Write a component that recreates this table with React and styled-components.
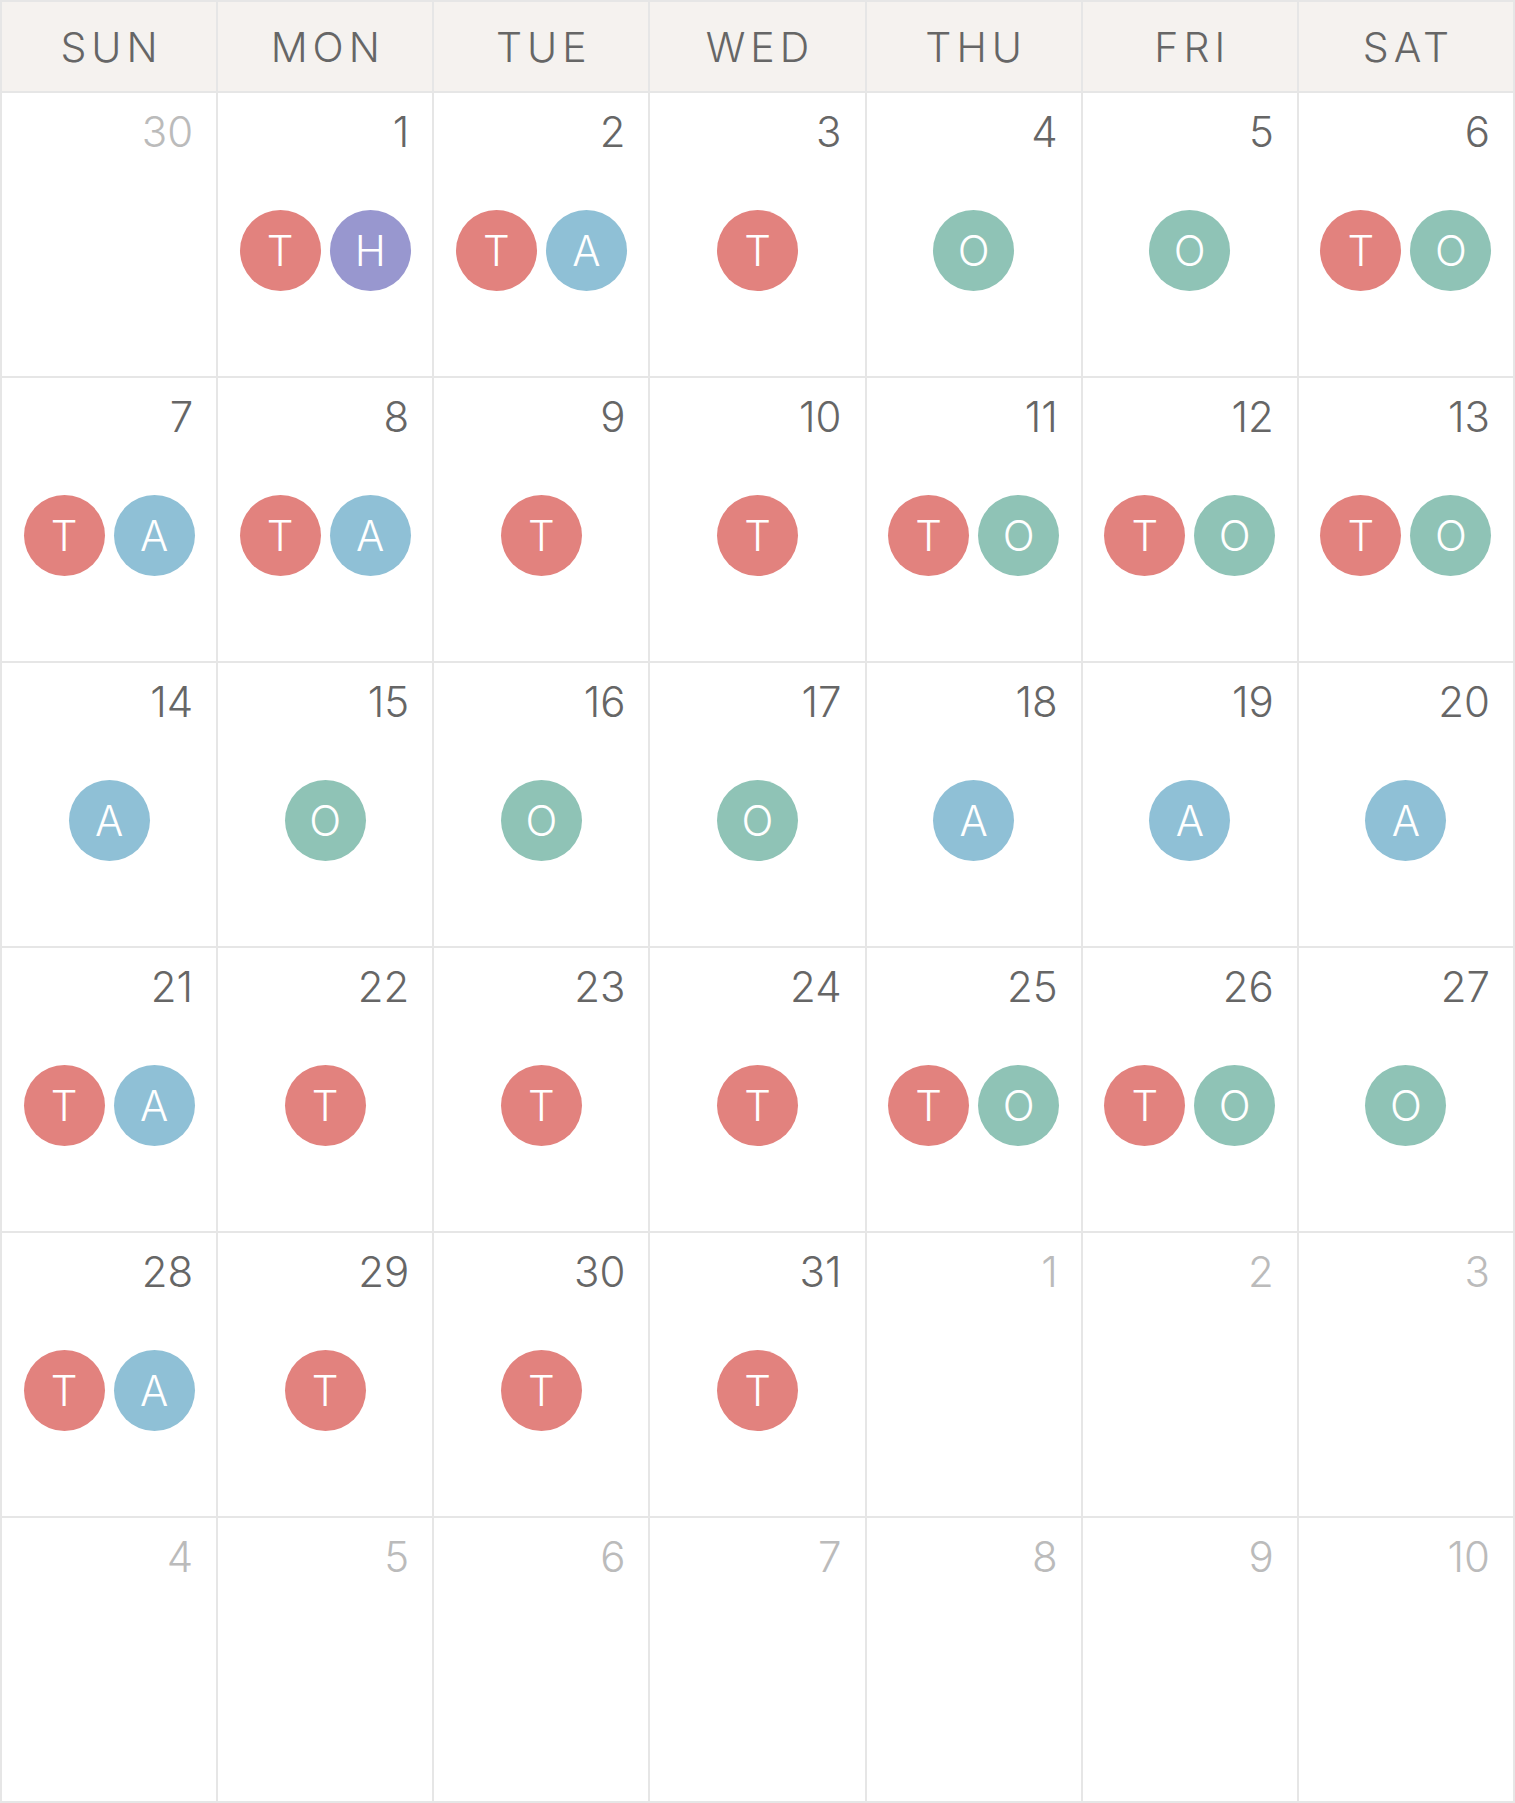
import React from "react";
import styled, { createGlobalStyle } from "styled-components";

const Global = createGlobalStyle`
  html, body { margin: 0; padding: 0; background: #ffffff; }
  body { font-family: Inter, "Noto Sans", sans-serif; }
`;

const LINE = "#e6e6e6";

const Calendar = styled.div`
  width: 1515px;
  box-sizing: border-box;
  border: 1px solid ${LINE};
  display: grid;
  grid-template-columns: repeat(7, 1fr);
  grid-template-rows: 91px repeat(6, 285px);
  font-family: Inter, "Noto Sans", sans-serif;
`;

const HeadCell = styled.div`
  box-sizing: border-box;
  border: 1px solid ${LINE};
  background: #f5f2ef;
  display: flex;
  align-items: center;
  justify-content: center;
  padding-left: 5px;
  font-size: 41px;
  font-weight: 300;
  letter-spacing: 5px;
  color: #666666;
`;

const DayCell = styled.div`
  box-sizing: border-box;
  border: 1px solid ${LINE};
  background: #ffffff;
  display: flex;
  flex-direction: column;
  padding: 18px 23px 0 0;
  min-width: 0;
`;

const DayNum = styled.div`
  text-align: right;
  font-size: 42px;
  line-height: 42px;
  font-weight: 300;
  color: ${(p) => (p.$muted ? "#bbbbbb" : "#666666")};
`;

const Badges = styled.div`
  display: flex;
  justify-content: center;
  gap: 9px;
  margin-top: 57px;
  margin-right: -23px;
`;

const COLORS = {
  T: "#e2827e",
  H: "#9897cf",
  A: "#8fc0d6",
  O: "#8fc3b6",
};

const Badge = styled.div`
  width: 81px;
  height: 81px;
  border-radius: 50%;
  background: ${(p) => COLORS[p.$kind]};
  color: #ffffff;
  display: flex;
  align-items: center;
  justify-content: center;
  font-size: 42px;
  font-weight: 300;
  line-height: 1;
`;

const days = ["SUN", "MON", "TUE", "WED", "THU", "FRI", "SAT"];

const events = {
  1: "TH", 2: "TA", 3: "T", 4: "O", 5: "O", 6: "TO",
  7: "TA", 8: "TA", 9: "T", 10: "T", 11: "TO", 12: "TO", 13: "TO",
  14: "A", 15: "O", 16: "O", 17: "O", 18: "A", 19: "A", 20: "A",
  21: "TA", 22: "T", 23: "T", 24: "T", 25: "TO", 26: "TO", 27: "O",
  28: "TA", 29: "T", 30: "T", 31: "T",
};

const cells = [];
cells.push({ n: 30, muted: true });
for (let d = 1; d <= 31; d++) cells.push({ n: d, muted: false, ev: events[d] || "" });
for (let d = 1; cells.length < 42; d++) cells.push({ n: d, muted: true });

export default function App() {
  return (
    <>
      <Global />
      <Calendar>
        {days.map((d) => (
          <HeadCell key={d}>{d}</HeadCell>
        ))}
        {cells.map((c, i) => (
          <DayCell key={i}>
            <DayNum $muted={c.muted}>{c.n}</DayNum>
            {c.ev ? (
              <Badges>
                {c.ev.split("").map((k, j) => (
                  <Badge key={j} $kind={k}>{k}</Badge>
                ))}
              </Badges>
            ) : null}
          </DayCell>
        ))}
      </Calendar>
    </>
  );
}
